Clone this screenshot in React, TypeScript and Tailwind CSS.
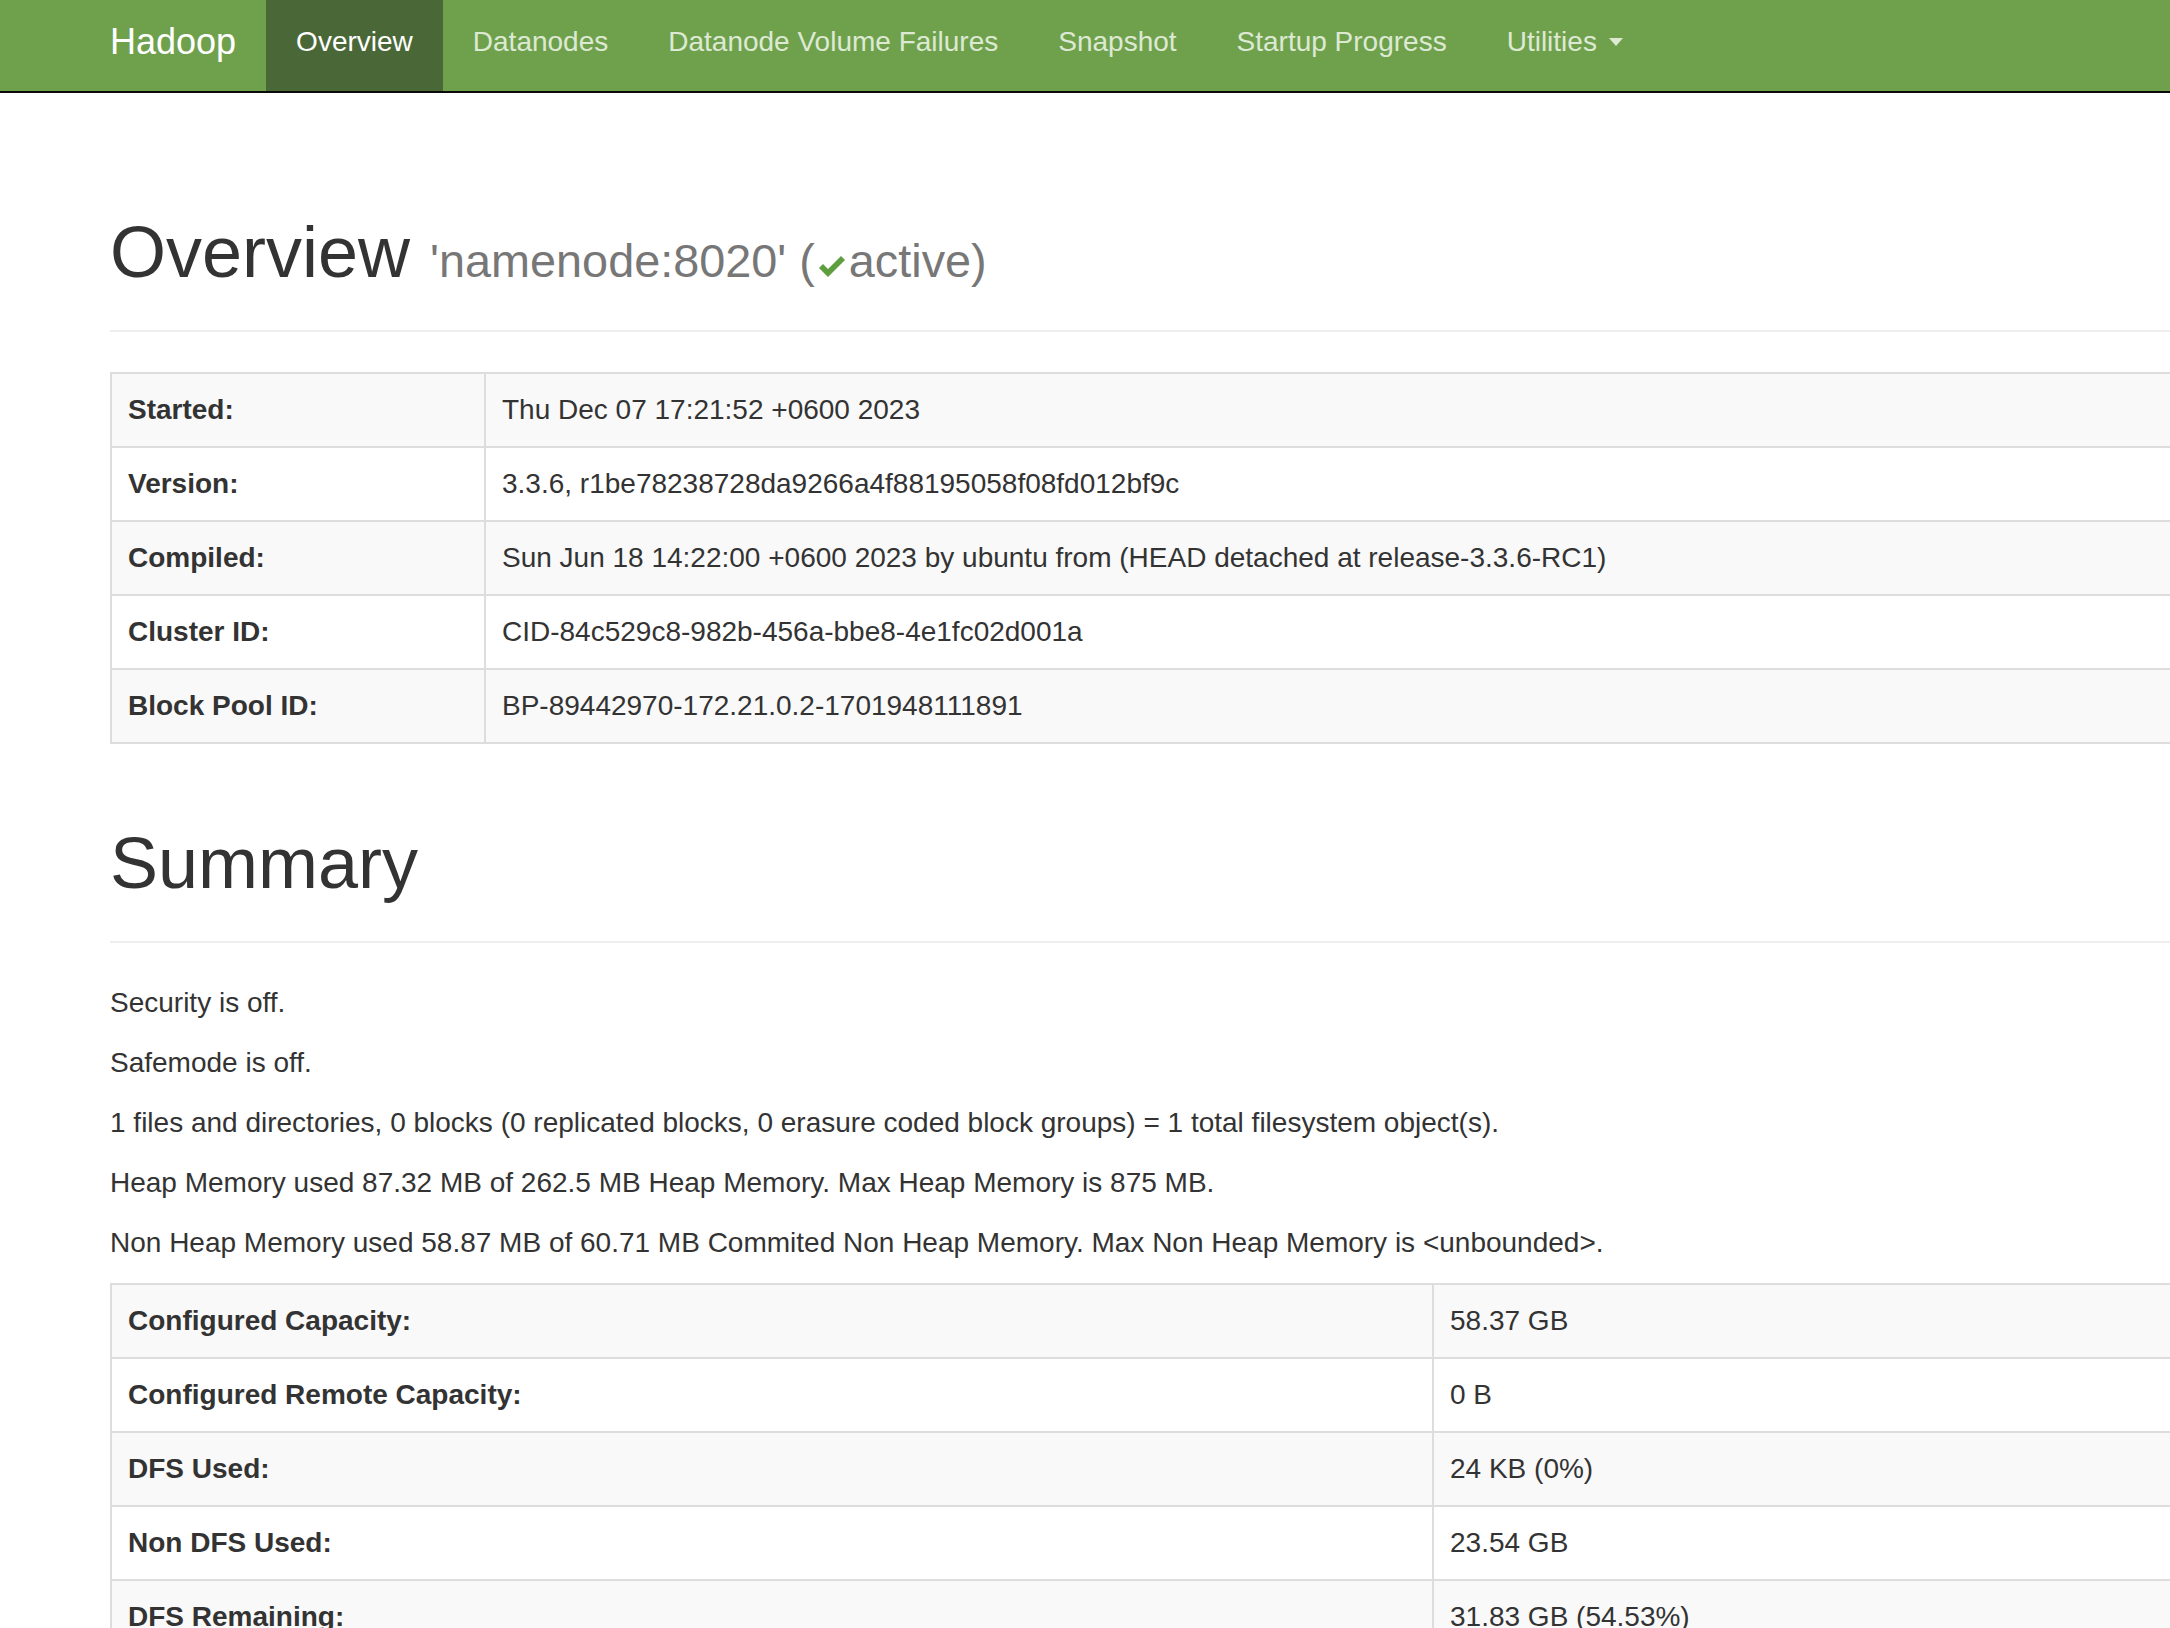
import React from "react";

const navItems = [
  "Overview",
  "Datanodes",
  "Datanode Volume Failures",
  "Snapshot",
  "Startup Progress",
];

const overviewRows: [string, string][] = [
  ["Started:", "Thu Dec 07 17:21:52 +0600 2023"],
  ["Version:", "3.3.6, r1be78238728da9266a4f88195058f08fd012bf9c"],
  [
    "Compiled:",
    "Sun Jun 18 14:22:00 +0600 2023 by ubuntu from (HEAD detached at release-3.3.6-RC1)",
  ],
  ["Cluster ID:", "CID-84c529c8-982b-456a-bbe8-4e1fc02d001a"],
  ["Block Pool ID:", "BP-89442970-172.21.0.2-1701948111891"],
];

const summaryLines = [
  "Security is off.",
  "Safemode is off.",
  "1 files and directories, 0 blocks (0 replicated blocks, 0 erasure coded block groups) = 1 total filesystem object(s).",
  "Heap Memory used 87.32 MB of 262.5 MB Heap Memory. Max Heap Memory is 875 MB.",
  "Non Heap Memory used 58.87 MB of 60.71 MB Commited Non Heap Memory. Max Non Heap Memory is <unbounded>.",
];

const summaryRows: [string, string][] = [
  ["Configured Capacity:", "58.37 GB"],
  ["Configured Remote Capacity:", "0 B"],
  ["DFS Used:", "24 KB (0%)"],
  ["Non DFS Used:", "23.54 GB"],
  ["DFS Remaining:", "31.83 GB (54.53%)"],
];

const InfoTable = ({
  rows,
  labelWidth,
}: {
  rows: [string, string][];
  labelWidth: string;
}) => (
  <table className="w-[2280px] table-fixed border-collapse border-2 border-[#ddd] mb-[40px]">
    <colgroup>
      <col className={labelWidth} />
      <col />
    </colgroup>
    <tbody>
      {rows.map(([label, value], i) => (
        <tr key={label} className={i % 2 === 0 ? "bg-[#f9f9f9]" : "bg-white"}>
          <th className="border-2 border-[#ddd] p-[16px] text-left align-top font-bold leading-[40px]">
            {label}
          </th>
          <td className="border-2 border-[#ddd] p-[16px] align-top leading-[40px]">
            {value}
          </td>
        </tr>
      ))}
    </tbody>
  </table>
);

const PageHeader = ({ children }: { children: React.ReactNode }) => (
  <div className="mt-[80px] mb-[40px] pb-[18px] border-b-2 border-[#eee]">
    <h1 className="text-[72px] leading-[1.1] font-normal text-[#333] mb-[20px]">
      {children}
    </h1>
  </div>
);

const CheckIcon = () => (
  <svg
    viewBox="0 0 28 22"
    className="inline-block w-[28px] h-[22px] mx-[3px] align-[-1px]"
  >
    <path d="M1 12 L5 8 L10 13 L23 0 L27 4 L10 21 Z" fill="#5f9e3e" />
  </svg>
);

export default function App() {
  return (
    <div
      className="w-full h-screen overflow-hidden bg-white text-[28px] leading-[40px] text-[#333]"
      style={{ fontFamily: '"Liberation Sans", Arial, sans-serif' }}
    >
      <nav className="h-[93px] bg-[#6fa14d] border-b-2 border-[#0a0a0a] flex items-stretch pl-[80px]">
        <div className="flex items-center px-[30px] pb-[8px] text-[36px] text-white">
          Hadoop
        </div>
        {navItems.map((item, i) => (
          <div
            key={item}
            className={
              i === 0
                ? "flex items-center px-[30px] pb-[8px] bg-[#4a6837] text-white"
                : "flex items-center px-[30px] pb-[8px] text-[#dde9d3]"
            }
          >
            {item}
          </div>
        ))}
        <div className="flex items-center px-[30px] pb-[8px] text-[#dde9d3]">
          Utilities
          <span className="ml-[12px] w-0 h-0 border-t-[8px] border-t-[#dde9d3] border-x-[7px] border-x-transparent" />
        </div>
      </nav>

      <main className="pl-[110px] pt-[40px] w-[2400px]">
        <PageHeader>
          Overview{" "}
          <small className="text-[46.8px] text-[#777]">
            'namenode:8020' (<CheckIcon />
            active)
          </small>
        </PageHeader>

        <InfoTable rows={overviewRows} labelWidth="w-[374px]" />

        <PageHeader>Summary</PageHeader>

        {summaryLines.map((line) => (
          <p key={line} className="mb-[20px]">
            {line}
          </p>
        ))}

        <InfoTable rows={summaryRows} labelWidth="w-[1322px]" />
      </main>
    </div>
  );
}
